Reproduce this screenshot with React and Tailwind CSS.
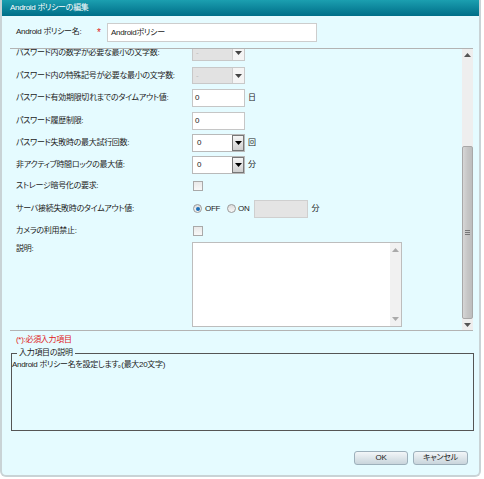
const Arrow = ({ up = false, tone = "text-black" }) => (
  <svg width="7" height="4" viewBox="0 0 7 4" className={tone}>
    <path d={up ? "M0 4 L3.5 0 L7 4 Z" : "M0 0 L7 0 L3.5 4 Z"} fill="currentColor" />
  </svg>
);

const DisabledSelect = () => (
  <div className="flex h-[17px] w-[53px] border border-[#c8c8c8] bg-[#e2e2e2]">
    <div className="flex-1 pl-[3px] text-[8px] leading-[15px] text-[#bbb]">-</div>
    <div className="flex w-[12px] items-center justify-center border-l border-[#cfcfcf] bg-[#f4f4f4]">
      <Arrow tone="text-[#444]" />
    </div>
  </div>
);

const ActiveSelect = () => (
  <div className="flex h-[18px] w-[53px] border border-[#b9b9b9] bg-white">
    <div className="flex-1 pl-[4px] leading-[16px]">0</div>
    <div className="flex w-[12px] items-center justify-center border border-[#777] bg-gradient-to-b from-[#f6f6f6] to-[#cfcfcf]">
      <Arrow />
    </div>
  </div>
);

const TextBox = ({ value }) => (
  <div className="h-[18px] w-[53px] border border-[#c6c6c6] bg-white pl-[2px] leading-[16px]">{value}</div>
);

const Check = () => (
  <div className="ml-[1px] h-[10px] w-[10px] border border-[#a9a9a9] bg-gradient-to-b from-[#e9e9e9] to-[#f8f8f8]" />
);

const Radio = ({ on }) => (
  <span className="flex h-[9px] w-[9px] items-center justify-center rounded-full border border-[#9a9a9a] bg-gradient-to-b from-[#dcdcdc] to-[#f8f8f8]">
    {on && <span className="h-[4px] w-[4px] rounded-full bg-[#1d6fb8]" />}
  </span>
);

const rows = [
  { label: "パスワード内の数字が必要な最小の文字数:", h: "h-[23px]", field: <DisabledSelect /> },
  { label: "パスワード内の特殊記号が必要な最小の文字数:", h: "h-[23px]", field: <DisabledSelect /> },
  { label: "パスワード有効期限切れまでのタイムアウト値:", h: "h-[22px]", field: <TextBox value="0" />, unit: "日" },
  { label: "パスワード履歴制限:", h: "h-[23px]", field: <TextBox value="0" /> },
  { label: "パスワード失敗時の最大試行回数:", h: "h-[22px]", field: <ActiveSelect />, unit: "回" },
  { label: "非アクティブ時間ロックの最大値:", h: "h-[21px]", field: <ActiveSelect />, unit: "分" },
  { label: "ストレージ暗号化の要求:", h: "h-[22px]", field: <Check /> },
  {
    label: "サーバ接続失敗時のタイムアウト値:",
    h: "h-[23px]",
    field: (
      <div className="flex items-center">
        <span className="ml-[1px]"><Radio on /></span>
        <span className="ml-[3px]">OFF</span>
        <span className="ml-[7px]"><Radio /></span>
        <span className="ml-[2px]">ON</span>
        <div className="ml-[4px] h-[18px] w-[54px] border border-[#cfcfcf] bg-[#e4e4e4]" />
        <span className="ml-[4px]">分</span>
      </div>
    ),
  },
  { label: "カメラの利用禁止:", h: "h-[22px]", field: <Check /> },
];

const App = () => {
  return (
    <div className="h-[479px] w-[484px] bg-white font-['Liberation_Sans','Noto_Sans_CJK_JP',sans-serif] text-[8px] tracking-[-0.3px] text-[#222] [font-feature-settings:'palt']">
      <div className="flex h-[477px] w-[481px] flex-col overflow-hidden rounded-br-[6px] rounded-bl-[6px] border-r-2 border-b-2 border-l-2 border-[#c9d3d6] bg-[#e5fbff]">
        <div className="flex h-[16px] items-center bg-gradient-to-b from-[#1b9fb0] to-[#006e88] pl-[8px] text-white">
          Android ポリシーの編集
        </div>

        <div className="flex h-[32px] items-center pl-[14px]">
          <span className="w-[81px]">Android ポリシー名:</span>
          <span className="w-[10px] text-[10px] text-[#e02020]">*</span>
          <div className="h-[19px] w-[210px] border border-[#cdcdcd] bg-white pl-[3px] leading-[17px]">Androidポリシー</div>
        </div>

        <div className="mr-[6px] ml-[8px] flex h-[283px] border-t border-b border-[#b3b3b3]">
          <div className="flex-1 overflow-hidden">
            <div className="mt-[-8px]">
              {rows.map((row) => (
                <div key={row.label} className={`flex items-center pl-[6px] ${row.h}`}>
                  <span className="w-[176px] whitespace-nowrap">{row.label}</span>
                  {row.field}
                  {row.unit && <span className="ml-[3px]">{row.unit}</span>}
                </div>
              ))}
              <div className="flex pl-[6px]">
                <span className="mt-[1px] w-[176px]">説明:</span>
                <div className="flex h-[85px] w-[210px] border border-[#bdbdbd] bg-white">
                  <div className="flex-1" />
                  <div className="flex w-[11px] flex-col items-center justify-between bg-[#f1f1f1] py-[5px]">
                    <Arrow up tone="text-[#aaa]" />
                    <Arrow tone="text-[#aaa]" />
                  </div>
                </div>
              </div>
            </div>
          </div>
          <div className="flex w-[11px] flex-col bg-[#eeeeee]">
            <div className="flex h-[12px] items-center justify-center">
              <Arrow up tone="text-[#555]" />
            </div>
            <div className="h-[85px]" />
            <div className="flex h-[173px] items-center justify-center rounded-[2px] border border-[#a8a8a8] bg-gradient-to-r from-[#d6d6d6] via-[#c6c6c6] to-[#bdbdbd]">
              <div className="flex flex-col gap-[1px]">
                <div className="h-[1px] w-[5px] bg-[#777]" />
                <div className="h-[1px] w-[5px] bg-[#777]" />
                <div className="h-[1px] w-[5px] bg-[#777]" />
              </div>
            </div>
            <div className="flex flex-1 items-center justify-center">
              <Arrow tone="text-[#555]" />
            </div>
          </div>
        </div>

        <div className="h-[17px] pt-[3px] pl-[14px] text-[#e02020]">(*):必須入力項目</div>

        <fieldset className="mr-[5px] ml-[9px] h-[83px] border border-[#555] px-[0px]">
          <legend className="ml-[5px] px-[2px] leading-[10px]">入力項目の説明</legend>
          <div className="mt-[1px] leading-[12px]">Android ポリシー名を設定します。(最大20文字)</div>
        </fieldset>

        <div className="mt-[20px] flex justify-end gap-[5px] pr-[11px]">
          <button className="h-[14px] w-[54px] rounded-[3px] border border-[#9db0bb] bg-gradient-to-b from-[#f2f6f8] to-[#c9d5dc] text-[8px]">OK</button>
          <button className="h-[14px] w-[55px] rounded-[3px] border border-[#9db0bb] bg-gradient-to-b from-[#f2f6f8] to-[#c9d5dc] text-[8px]">キャンセル</button>
        </div>
      </div>
    </div>
  );
};

export default App;
